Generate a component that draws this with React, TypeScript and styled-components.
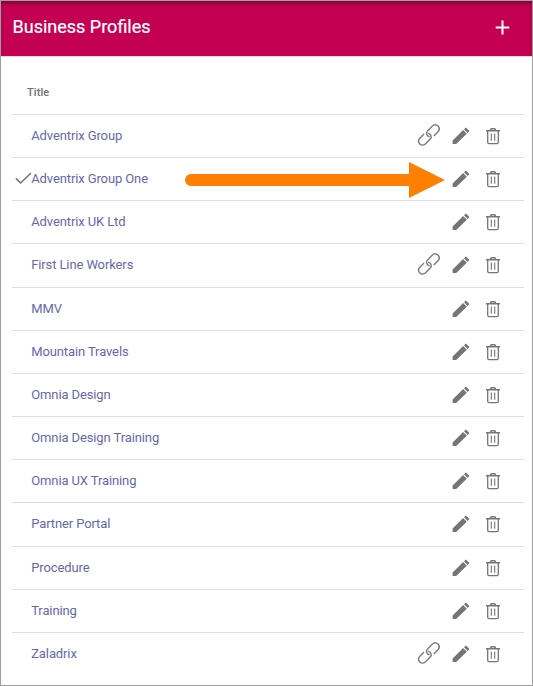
import React from "react";
import styled, { createGlobalStyle } from "styled-components";

const GlobalStyle = createGlobalStyle`
  * { box-sizing: border-box; }
  body { margin: 0; background: #fff; font-family: Roboto, "Liberation Sans", sans-serif; }
`;

const Panel = styled.main`
  display: flex;
  flex-direction: column;
  width: 533px;
  height: 686px;
  border: 1px solid #9f9f9f;
  background: #fff;
  overflow: hidden;
`;

const Header = styled.header`
  display: flex;
  flex: none;
  align-items: center;
  justify-content: space-between;
  height: 56px;
  padding: 0 22px 3px 11.5px;
  background: #c30052;
  border-bottom: 1px solid #dfd8dc;
  box-shadow: inset 0 3px 4px -1px rgba(50, 0, 25, 0.5);
  color: #fff;
`;

const Heading = styled.h1`
  margin: 0;
  font-size: 18px;
  font-weight: 400;
  line-height: 24px;
  -webkit-text-stroke: 0.2px #fff;
`;

const IconButton = styled.button`
  display: flex;
  align-items: center;
  justify-content: center;
  padding: 0;
  border: 0;
  background: none;
  color: inherit;
`;

const ColumnTitle = styled.div`
  height: 56.95px;
  flex: none;
  padding: 28px 0 0 26px;
  color: #707070;
  font-size: 11px;
  font-weight: 500;
  line-height: 16px;
  letter-spacing: 0.1px;
`;

const List = styled.ul`
  margin: 0 8px 0 11px;
  padding: 0;
  list-style: none;
`;

const Row = styled.li`
  position: relative;
  display: grid;
  grid-template-columns: 19px 1fr 28px 32px 32px 15px;
  align-items: center;
  height: 43.17px;
  border-top: 1px solid #dfdfdf;
  color: #757575;
`;

const Name = styled.a`
  color: #6668ab;
  font-size: 13px;
  line-height: 18px;
  letter-spacing: -0.11px;
  padding-left: 0.2px;
  white-space: nowrap;
`;

const Glyph = styled.svg`
  display: block;
  overflow: visible;
`;

const CheckMark = styled(Glyph)`
  margin: -2px 0 0 3px;
`;

const RowIcon = styled(Glyph)<{ $raise: number }>`
  margin-bottom: ${(p) => p.$raise}px;
`;

const Pointer = styled.svg`
  position: absolute;
  left: 173px;
  top: 4px;
  pointer-events: none;
`;

const Plus = () => (
  <Glyph width="15" height="15" viewBox="0 0 15 15">
    <path d="M7.5 .5V14.5M.7 7.5H14.3" stroke="#fff" strokeWidth="2" />
  </Glyph>
);

const LinkIcon = () => (
  <RowIcon $raise={2} width="24" height="24" viewBox="0 0 24 24" fill="none" stroke="#7a7a7a" strokeWidth="1.4">
    <path d="M12.6 13.9C9.8 13.4 8.6 10.1 10.6 7.9L14.9 3.4C16.8 1.5 19.3 1.4 21 3.1S22.6 7.2 20.7 9.1L16.8 13" />
    <path d="M11.2 10.1C14 10.6 15.2 13.9 13.2 16.1L8.9 20.6C7 22.5 4.5 22.6 2.8 20.9S1.2 16.8 3.1 14.9L7 11" />
  </RowIcon>
);

const Pencil = () => (
  <RowIcon $raise={0} width="18" height="18" viewBox="0 0 18 18" fill="currentColor">
    <path d="M.6 13.6 11.1 3.1l3.7 3.7L4.2 17.1H.6zM12 2.2l1.3-1.3q.6-.6 1.2 0l2.5 2.5q.6.6 0 1.2l-1.3 1.3z" />
  </RowIcon>
);

const Trash = () => (
  <RowIcon $raise={-1} width="14" height="17" viewBox="0 0 14 17" fill="none" stroke="currentColor">
    <path d="M0 2.7H14M4.5 2.7V2Q4.5 .8 5.8 .8H8.2Q9.5 .8 9.5 2V2.7" strokeWidth="1.4" />
    <path d="M1.7 2.7V14.2Q1.7 15.6 3 15.6H11Q12.3 15.6 12.3 14.2V2.7" strokeWidth="1.3" />
    <path d="M5.3 5.6V12.7M8.7 5.6V12.7" strokeWidth="1.1" />
  </RowIcon>
);

type Profile = { name: string; linked?: boolean; current?: boolean };

const profiles: Profile[] = [
  { name: "Adventrix Group", linked: true },
  { name: "Adventrix Group One", current: true },
  { name: "Adventrix UK Ltd" },
  { name: "First Line Workers", linked: true },
  { name: "MMV" },
  { name: "Mountain Travels" },
  { name: "Omnia Design" },
  { name: "Omnia Design Training" },
  { name: "Omnia UX Training" },
  { name: "Partner Portal" },
  { name: "Procedure" },
  { name: "Training" },
  { name: "Zaladrix", linked: true },
];

export default function App() {
  return (
    <>
      <GlobalStyle />
      <Panel>
        <Header>
          <Heading>Business Profiles</Heading>
          <IconButton aria-label="Add profile"><Plus /></IconButton>
        </Header>
        <ColumnTitle>Title</ColumnTitle>
        <List>
          {profiles.map((p) => (
            <Row key={p.name}>
              <span>
                {p.current && (
                  <CheckMark width="17" height="13" viewBox="0 0 17 13">
                    <path d="M1 6.4 5.6 11 16 1" fill="none" stroke="currentColor" strokeWidth="1.6" />
                  </CheckMark>
                )}
              </span>
              <Name>{p.name}</Name>
              <span>{p.linked && <LinkIcon />}</span>
              <IconButton aria-label="Edit"><Pencil /></IconButton>
              <IconButton aria-label="Delete"><Trash /></IconButton>
              {p.current && (
                <Pointer width="260" height="36" viewBox="0 0 260 36">
                  <path d="M6 12H224V0L260 18 224 36V24H6A6 6 0 0 1 6 12Z" fill="#ff8000" />
                </Pointer>
              )}
            </Row>
          ))}
        </List>
      </Panel>
    </>
  );
}
